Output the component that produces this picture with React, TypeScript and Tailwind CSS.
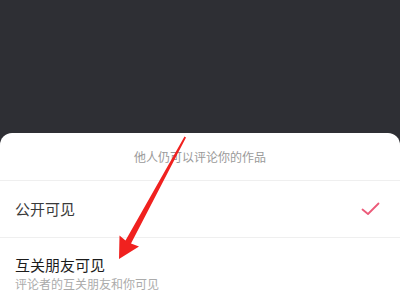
import React from 'react';

const font = { fontFamily: '"Noto Sans CJK SC", "Noto Sans", sans-serif' };

const App: React.FC = () => {
  return (
    <div className="relative flex h-[300px] w-[400px] flex-col overflow-hidden bg-[#2e2f34]" style={font}>
      {/* dark backdrop */}
      <div className="h-[133px] shrink-0" />

      {/* bottom sheet */}
      <div className="flex flex-1 flex-col rounded-t-[12px] bg-white">
        <div className="flex h-[47px] items-center justify-center text-[12px] text-[#9a9a9a]">
          他人仍可以评论你的作品
        </div>
        <div className="h-px bg-[#efefef]" />
        <div className="flex h-[56px] items-center justify-between pl-[15px] pr-[20px]">
          <span className="text-[15px] text-[#3a3a3a]">公开可见</span>
          <svg width="19" height="14" viewBox="0 0 19 14" fill="none">
            <polyline points="1.5,7.5 7,12 17.5,1.5" stroke="#ec5a79" strokeWidth="1.8" strokeLinecap="round" strokeLinejoin="round" />
          </svg>
        </div>
        <div className="h-px bg-[#efefef]" />
        <div className="flex flex-col pl-[15px] pt-[17px]">
          <span className="text-[15px] leading-[20px] text-[#1c1c1c]">互关朋友可见</span>
          <span className="mt-[1px] text-[12px] leading-[16px] text-[#ababab]">评论者的互关朋友和你可见</span>
        </div>
      </div>

      {/* red annotation arrow */}
      <svg className="pointer-events-none absolute left-0 top-0" width="400" height="300" viewBox="0 0 400 300">
        <polygon
          points="184.5,136.5 186,137.5 131,243.5 139,246.5 119,259 119.5,235.5 125.5,240.5"
          fill="#f0211f"
        />
      </svg>
    </div>
  );
};

export default App;
